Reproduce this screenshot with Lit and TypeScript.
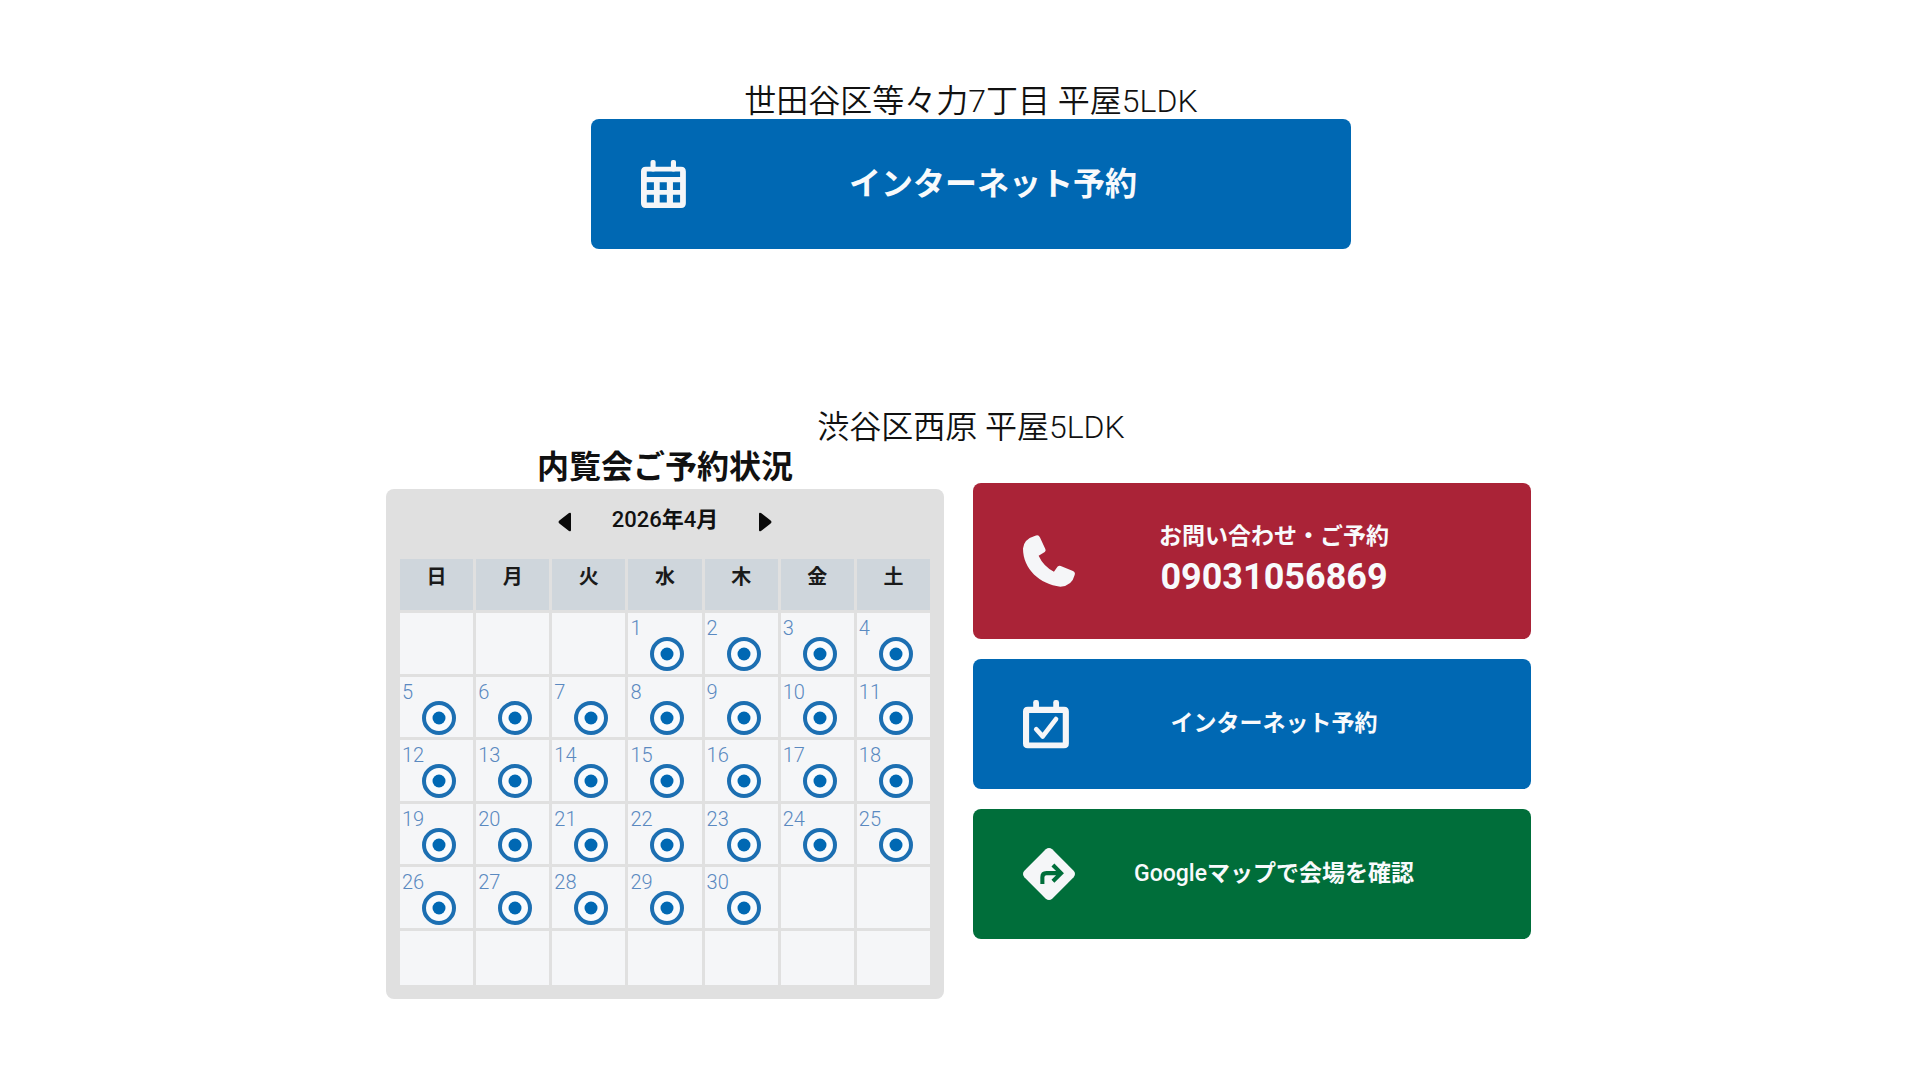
import { LitElement, html, svg, css } from "lit";
import { customElement, property } from "lit/decorators.js";

const icons = {
  calendar: svg`<svg class="icon" viewBox="0 0 153 153" aria-hidden="true">
    <rect x="28" y="6" width="15" height="34" rx="6"/><rect x="88" y="6" width="15" height="34" rx="6"/>
    <path fill-rule="evenodd" d="M14 26H118Q132 26 132 40V133Q132 147 118 147H14Q0 147 0 133V40Q0 26 14 26ZM17 40V56H115V40ZM17 71V94H38V71ZM55 71V94H76V71ZM94 71V94H115V71ZM17 108V131H38V108ZM55 108V131H76V108ZM94 108V131H115V108Z"/></svg>`,
  check: svg`<svg class="icon" viewBox="0 0 153 153" aria-hidden="true">
    <rect x="30" y="6" width="17" height="30" rx="7"/><rect x="89" y="6" width="17" height="30" rx="7"/>
    <path fill-rule="evenodd" d="M14 26H121Q135 26 135 40V134Q135 148 121 148H14Q0 148 0 134V40Q0 26 14 26ZM18 44V131H117V44Z"/>
    <path class="tick" d="M39 92L58 113L97 62"/></svg>`,
  phone: svg`<svg class="icon" viewBox="0 0 153 153" aria-hidden="true">
    <path d="M36 2Q46 -2 50 7L66 42Q68 47 64 50L46 61Q60 92 91 108L102 93Q106 89 111 91L147 106Q155 110 152 118Q144 151 110 152C50 146 0 100 0 40Q2 12 36 2Z"/></svg>`,
  directions: svg`<svg class="icon" viewBox="0 0 153 153" aria-hidden="true">
    <path d="M67 4Q76.500 -4 86 4L149 67Q157 76.500 149 86L86 149Q76.500 157 67 149L4 86Q-4 76.500 4 67Z"/>
    <path class="turn" d="M57 106V86Q57 74 69 74H108M88 50L112 74L88 98"/></svg>`,
};

@customElement("action-link")
class ActionLink extends LitElement {
  @property() icon: keyof typeof icons = "calendar";
  @property() tone = "blue";
  @property() label = "";
  @property() number = "";
  @property() size = "";
  @property() href = "#";

  static styles = css`
    :host { display: block; }
    .link {
      display: flex; align-items: center; box-sizing: border-box;
      min-height: 130px; padding: 24px 50px; border-radius: 8px;
      color: #f8fafc; text-decoration: none; text-align: center;
      font-weight: 700; font-size: 23px; line-height: 36px;
    }
    .blue { background: #0068b3; }
    .red { background: #aa2337; min-height: 156px; }
    .green { background: #006e3a; }
    .large { font-size: 32px; }
    .slot { flex: none; width: 44px; height: 52px; }
    .icon { display: block; width: 52px; height: 52px; fill: #f5f6f8; overflow: visible; }
    .tick { fill: none; stroke: #f5f6f8; stroke-width: 14; stroke-linecap: round; stroke-linejoin: round; }
    .turn { fill: none; stroke: #006e3a; stroke-width: 12; }
    .text { flex: 1; display: flex; flex-direction: column; }
    .number { font-size: 36px; line-height: 44px; }
    .red .text { padding-bottom: 4px; }
    .green .text { font-weight: 500; }
    .green .cjk { font-weight: 700; }
  `;

  render() {
    const [, latin, rest] = this.label.match(/^([A-Za-z]*)(.*)$/)!;
    return html`<a class="link ${this.tone} ${this.size}" href=${this.href}>
      <span class="slot">${icons[this.icon]}</span>
      <span class="text">
        <span>${latin}<span class="cjk">${rest}</span></span>
        ${this.number ? html`<span class="number">${this.number}</span>` : ""}
      </span>
    </a>`;
  }
}

@customElement("month-calendar")
class MonthCalendar extends LitElement {
  @property({ type: Number }) year = 2026;
  @property({ type: Number }) month = 4;

  static styles = css`
    :host { display: block; }
    .panel { background: #e0e0e0; border-radius: 8px; padding: 11px; }
    .bar { display: flex; justify-content: center; align-items: center; height: 40px; margin-bottom: 16px; }
    .label { width: 178px; text-align: center; font-size: 22px; line-height: 32px; font-weight: 500; color: #111; }
    .cjk { font-weight: 700; }
    .nav { border: 0; padding: 6px 4px 2px; background: none; display: flex; cursor: pointer; }
    .caret { width: 14px; height: 20px; fill: #0a0a0a; }
    .grid { width: 100%; height: 432px; border-collapse: separate; border-spacing: 3px; table-layout: fixed; }
    .head { height: 51px; box-sizing: border-box; padding: 2px 0 0; vertical-align: top; background: #cfd6dc; font-size: 20px; line-height: 32px; font-weight: 700; color: #1a1a1a; }
    .day { height: 60px; padding: 0; vertical-align: top; background: #f5f6f8; }
    .last .day { height: 54px; }
    .open { display: flex; flex-direction: column; text-decoration: none; color: #5a89c0; font-size: 20px; font-weight: 300; line-height: 24px; padding: 3px 0 0 2px; }
    .mark { width: 34px; height: 34px; align-self: center; margin: -3px 0 0 3px; }
    .ring { fill: #f9fbfd; stroke: #1c6fb2; stroke-width: 4; }
    .dot { fill: #0068b3; }
  `;

  private shift(step: number) {
    const d = new Date(this.year, this.month - 1 + step, 1);
    this.year = d.getFullYear();
    this.month = d.getMonth() + 1;
  }

  render() {
    const first = new Date(this.year, this.month - 1, 1).getDay();
    const count = new Date(this.year, this.month, 0).getDate();
    return html`<div class="panel">
      <div class="bar">
        <button class="nav" aria-label="前の月" @click=${() => this.shift(-1)}>
          <svg class="caret" viewBox="0 0 14 20"><path d="M13 2V18Q13 20 11 19L2 12Q-1 10 2 8L11 1Q13 0 13 2Z"/></svg>
        </button>
        <span class="label">${this.year}<span class="cjk">年</span>${this.month}<span class="cjk">月</span></span>
        <button class="nav" aria-label="次の月" @click=${() => this.shift(1)}>
          <svg class="caret" viewBox="0 0 14 20"><path d="M1 2V18Q1 20 3 19L12 12Q15 10 12 8L3 1Q1 0 1 2Z"/></svg>
        </button>
      </div>
      <table class="grid">
        <thead><tr>${[..."日月火水木金土"].map((d) => html`<th class="head" scope="col">${d}</th>`)}</tr></thead>
        <tbody>${[0, 1, 2, 3, 4, 5].map((week) => html`<tr class=${week === 5 ? "last" : "week"}>${[0, 1, 2, 3, 4, 5, 6].map((col) => {
          const day = week * 7 + col - first + 1;
          return html`<td class="day">${day > 0 && day <= count
            ? html`<a class="open" href="#day-${day}">${day}<svg class="mark" viewBox="0 0 34 34" aria-hidden="true"><circle class="ring" cx="17" cy="17" r="15"/><circle class="dot" cx="17" cy="17" r="6.5"/></svg></a>`
            : ""}</td>`;
        })}</tr>`)}</tbody>
      </table>
    </div>`;
  }
}

@customElement("app-root")
class AppRoot extends LitElement {
  static styles = css`
    :host {
      display: block; min-height: 100vh; box-sizing: border-box; background: #fff; color: #111;
      font-family: Roboto, "Noto Sans CJK JP", sans-serif;
    }
    .page { max-width: 1170px; margin: 0 auto; padding: 83px 0 80px 22px; }
    .title { margin: 0; text-align: center; font-size: 32px; line-height: 36px; font-weight: 350; }
    .single { width: 65%; margin: 0 auto 160px; }
    .columns { display: grid; grid-template-columns: 1fr 1fr; gap: 29px; padding-right: 25px; }
    .status { margin: 0; text-align: center; font-size: 32px; line-height: 44px; font-weight: 700; }
    .actions { display: flex; flex-direction: column; gap: 20px; padding-top: 38px; }
  `;

  render() {
    return html`<main class="page">
      <section>
        <h2 class="title">世田谷区等々力7丁目 平屋5LDK</h2>
        <div class="single"><action-link size="large" icon="calendar" label="インターネット予約"></action-link></div>
      </section>
      <section>
        <h2 class="title">渋谷区西原 平屋5LDK</h2>
        <div class="columns">
          <div>
            <h3 class="status">内覧会ご予約状況</h3>
            <month-calendar></month-calendar>
          </div>
          <div class="actions">
            <action-link tone="red" icon="phone" href="tel:09031056869" label="お問い合わせ・ご予約" number="09031056869"></action-link>
            <action-link icon="check" label="インターネット予約"></action-link>
            <action-link tone="green" icon="directions" label="Googleマップで会場を確認"></action-link>
          </div>
        </div>
      </section>
    </main>`;
  }
}
